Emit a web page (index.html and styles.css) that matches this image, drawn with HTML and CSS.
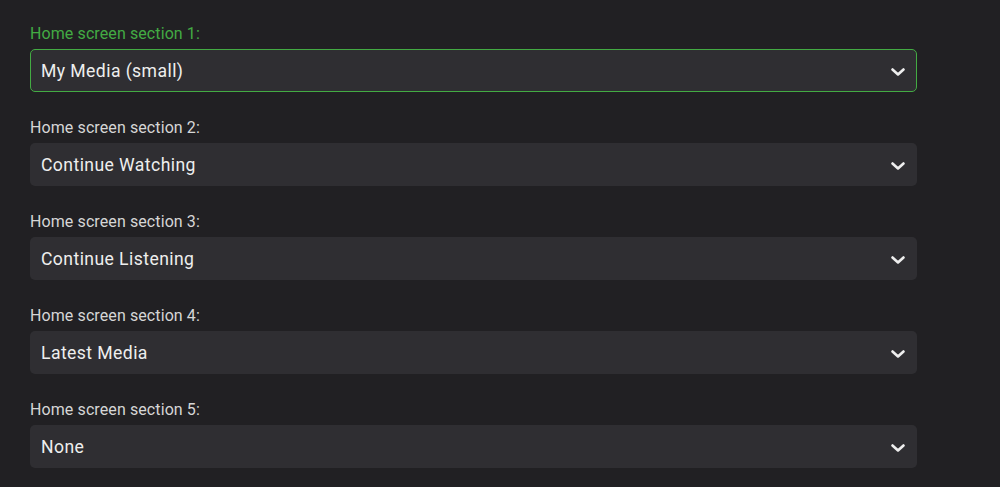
FILE: index.html
```html
<!DOCTYPE html>
<html lang="en">
<head>
    <meta charset="UTF-8">
    <meta name="viewport" content="width=device-width, initial-scale=1.0">
    <title>Home Screen</title>
    <link rel="stylesheet" href="styles.css">
</head>
<body>
    <div class="container">
        <div class="form-group focused">
            <label for="section1">Home screen section 1:</label>
            <div class="select-wrap">
                <select id="section1">
                    <option>My Media (small)</option>
                </select>
                <svg class="chevron" width="14" height="8" viewBox="0 0 14 8"><polyline points="1.5,1.5 7,6.5 12.5,1.5"/></svg>
            </div>
        </div>
        <div class="form-group">
            <label for="section2">Home screen section 2:</label>
            <div class="select-wrap">
                <select id="section2">
                    <option>Continue Watching</option>
                </select>
                <svg class="chevron" width="14" height="8" viewBox="0 0 14 8"><polyline points="1.5,1.5 7,6.5 12.5,1.5"/></svg>
            </div>
        </div>
        <div class="form-group">
            <label for="section3">Home screen section 3:</label>
            <div class="select-wrap">
                <select id="section3">
                    <option>Continue Listening</option>
                </select>
                <svg class="chevron" width="14" height="8" viewBox="0 0 14 8"><polyline points="1.5,1.5 7,6.5 12.5,1.5"/></svg>
            </div>
        </div>
        <div class="form-group">
            <label for="section4">Home screen section 4:</label>
            <div class="select-wrap">
                <select id="section4">
                    <option>Latest Media</option>
                </select>
                <svg class="chevron" width="14" height="8" viewBox="0 0 14 8"><polyline points="1.5,1.5 7,6.5 12.5,1.5"/></svg>
            </div>
        </div>
        <div class="form-group">
            <label for="section5">Home screen section 5:</label>
            <div class="select-wrap">
                <select id="section5">
                    <option>None</option>
                </select>
                <svg class="chevron" width="14" height="8" viewBox="0 0 14 8"><polyline points="1.5,1.5 7,6.5 12.5,1.5"/></svg>
            </div>
        </div>
    </div>
</body>
</html>
```

FILE: styles.css
```css
* {
    margin: 0;
    padding: 0;
    box-sizing: border-box;
    font-family: 'Roboto', 'Liberation Sans', sans-serif;
}

body {
    background-color: #212023;
    min-height: 100vh;
    overflow: hidden;
}

.container {
    width: 917px;
    padding: 24px 0 0 30px;
}

.form-group {
    margin-bottom: 26px;
}

label {
    display: block;
    height: 20px;
    line-height: 20px;
    margin-bottom: 5px;
    color: #d6d6d6;
    font-size: 16px;
    letter-spacing: 0.1px;
}

.focused label {
    color: #43ab43;
}

.select-wrap {
    position: relative;
}

select {
    -webkit-appearance: none;
    appearance: none;
    display: block;
    width: 100%;
    height: 43px;
    padding: 0 40px 0 10px;
    background-color: #2f2e32;
    color: #eeeeee;
    border: 1px solid transparent;
    border-radius: 5px;
    font-size: 17.6px;
    letter-spacing: 0.42px;
    outline: none;
}

.focused select {
    border-color: #43ab43;
}

.chevron {
    position: absolute;
    right: 12px;
    top: 19px;
    fill: none;
    stroke: #eeeeee;
    stroke-width: 2.6;
    stroke-linecap: round;
    stroke-linejoin: round;
    pointer-events: none;
}
```
